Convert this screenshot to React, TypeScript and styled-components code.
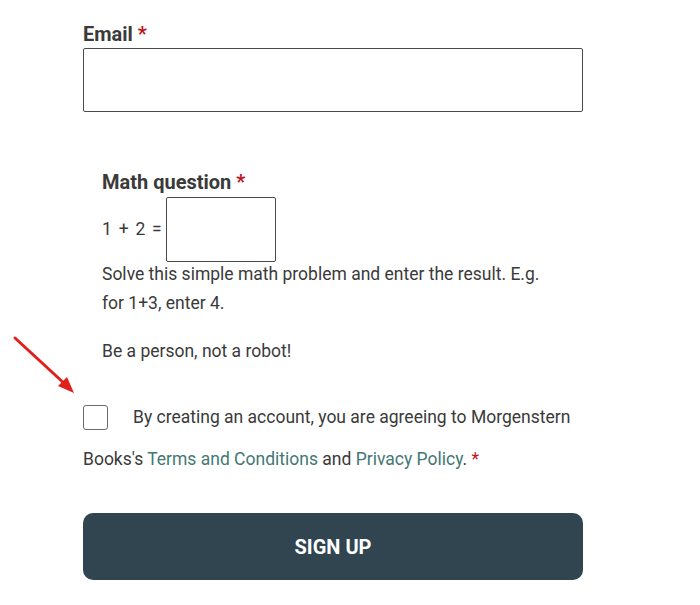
import styled, {createGlobalStyle} from "styled-components";

const GlobalStyle = createGlobalStyle`
    body {
        margin: 0;
        background: #ffffff;
        font-family: Roboto, "Liberation Sans", sans-serif;
        color: #3a3a3a;
    }
`;

const Page = styled.div`
    position: relative;
    width: 700px;
    height: 605px;
    overflow: hidden;
    padding: 22px 0 0 83px;
    box-sizing: border-box;
`;

const Form = styled.form`
    width: 500px;
`;

const Label = styled.label`
    display: block;
    font-size: 20px;
    font-weight: 700;
    line-height: 24px;
    color: #3a3a3a;
`;

const Required = styled.span`
    color: #c0141c;
`;

const TextInput = styled.input<{ $w?: number; $h?: number }>`
    display: block;
    box-sizing: border-box;
    width: ${(p) => p.$w ?? 500}px;
    height: ${(p) => p.$h ?? 64}px;
    margin: 2px 0 0;
    border: 1px solid #4a4a4a;
    border-radius: 2px;
    background: #fff;
    padding: 0 10px;
    font: inherit;
`;

const Fieldset = styled.fieldset`
    border: none;
    margin: 58px 0 0;
    padding: 0 0 0 19px;
`;

const MathRow = styled.div`
    display: flex;
    align-items: center;
    gap: 4px;
    margin-top: 1px;
    font-size: 17.5px;
    word-spacing: 2.5px;
`;

const Help = styled.p<{ $top?: number }>`
    margin: ${(p) => p.$top ?? 0}px 0 0;
    max-width: 450px;
    font-size: 17.5px;
    line-height: 29px;
`;

const Consent = styled.p`
    margin: 30px 0 0;
    font-size: 17.5px;
    line-height: 42px;
`;

const Checkbox = styled.span`
    display: inline-block;
    box-sizing: border-box;
    width: 25px;
    height: 25px;
    margin-right: 25px;
    vertical-align: -7px;
    border: 1px solid #6b6b6b;
    border-radius: 3px;
    background: #fff;
`;

const Link = styled.a`
    color: #437873;
    text-decoration: none;
`;

const SubmitButton = styled.button`
    display: block;
    width: 500px;
    height: 67px;
    margin-top: 33px;
    border: none;
    border-radius: 10px;
    background: #30454f;
    color: #ffffff;
    font-family: Roboto, "Liberation Sans", sans-serif;
    font-size: 20px;
    font-weight: 700;
    cursor: pointer;
`;

const Arrow = styled.svg`
    position: absolute;
    left: 10px;
    top: 333px;
`;

export default function App() {
  return (
    <Page>
      <GlobalStyle/>
      <Form onSubmit={(e) => e.preventDefault()}>
        <Label>Email <Required>*</Required></Label>
        <TextInput type="email"/>

        <Fieldset>
          <Label>Math question <Required>*</Required></Label>
          <MathRow>
            <span>1 + 2 =</span>
            <TextInput $w={110} $h={65}/>
          </MathRow>
          <Help $top={-2}>Solve this simple math problem and enter the result. E.g. for 1+3, enter 4.</Help>
          <Help $top={19}>Be a person, not a robot!</Help>
        </Fieldset>

        <Consent>
          <Checkbox/>
          By creating an account, you are agreeing to Morgenstern Books's{" "}
          <Link href="#">Terms and Conditions</Link> and{" "}
          <Link href="#">Privacy Policy</Link>. <Required>*</Required>
        </Consent>

        <SubmitButton type="submit">SIGN UP</SubmitButton>
      </Form>

      <Arrow width="70" height="66" viewBox="0 0 70 66">
        <line x1="5" y1="5" x2="56" y2="52" stroke="#e0201c" strokeWidth="3" strokeLinecap="round"/>
        <polygon points="64,60 48,53 57,44" fill="#e0201c"/>
      </Arrow>
    </Page>
  );
}
